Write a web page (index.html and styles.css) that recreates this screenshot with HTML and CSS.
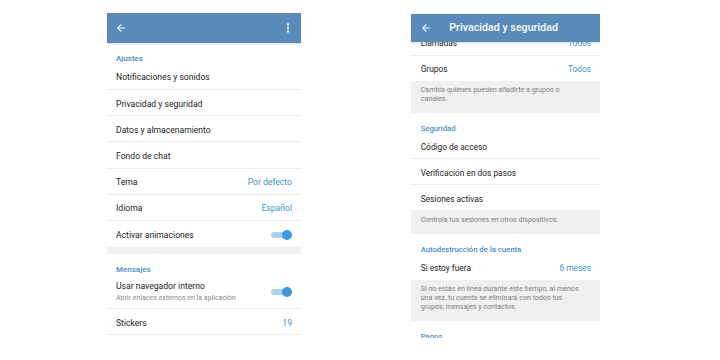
FILE: index.html
```html
<!DOCTYPE html>
<html lang="es">
<head>
<meta charset="utf-8">
<title>Ajustes</title>
<link rel="stylesheet" href="styles.css">
</head>
<body>
<div class="stage">
  <section class="phone phone-left">
    <header class="bar">
      <svg class="back" viewBox="0 0 24 24"><path d="M20 11H7.83l5.59-5.59L12 4l-8 8 8 8 1.41-1.41L7.83 13H20v-2z"/></svg>
      <svg class="more" viewBox="0 0 24 24"><circle cx="12" cy="6" r="2"/><circle cx="12" cy="12" r="2"/><circle cx="12" cy="18" r="2"/></svg>
    </header>
    <div class="sec">Ajustes</div>
    <div class="row"><span>Notificaciones y sonidos</span></div>
    <div class="row"><span>Privacidad y seguridad</span></div>
    <div class="row"><span>Datos y almacenamiento</span></div>
    <div class="row"><span>Fondo de chat</span></div>
    <div class="row"><span>Tema</span><span class="val">Por defecto</span></div>
    <div class="row"><span>Idioma</span><span class="val">Español</span></div>
    <div class="row last"><span>Activar animaciones</span>
      <svg class="toggle" viewBox="0 0 22 10"><rect x="1" y="2" width="19" height="6" rx="3"/><circle cx="17" cy="5" r="5"/></svg>
    </div>
    <div class="band"></div>
    <div class="sec">Mensajes</div>
    <div class="row check">
      <div class="stack"><span class="t">Usar navegador interno</span><span class="sub">Abrir enlaces externos en la aplicación</span></div>
      <svg class="toggle" viewBox="0 0 22 10"><rect x="1" y="2" width="19" height="6" rx="3"/><circle cx="17" cy="5" r="5"/></svg>
    </div>
    <div class="row"><span>Stickers</span><span class="val">19</span></div>
  </section>

  <section class="phone phone-right">
    <header class="bar">
      <svg class="back" viewBox="0 0 24 24"><path d="M20 11H7.83l5.59-5.59L12 4l-8 8 8 8 1.41-1.41L7.83 13H20v-2z"/></svg>
      <span class="title">Privacidad y seguridad</span>
    </header>
    <div class="clip"><div class="row"><span>Llamadas</span><span class="val">Todos</span></div></div>
    <div class="row last"><span>Grupos</span><span class="val">Todos</span></div>
    <div class="info">Cambia quiénes pueden añadirte a grupos o<br>canales.</div>
    <div class="sec">Seguridad</div>
    <div class="row"><span>Código de acceso</span></div>
    <div class="row"><span>Verificación en dos pasos</span></div>
    <div class="row last"><span>Sesiones activas</span></div>
    <div class="info">Controla tus sesiones en otros dispositivos.</div>
    <div class="sec">Autodestrucción de la cuenta</div>
    <div class="row last"><span>Si estoy fuera</span><span class="val">6 meses</span></div>
    <div class="info">Si no estás en línea durante este tiempo, al menos<br>una vez, tu cuenta se eliminará con todos tus<br>grupos, mensajes y contactos.</div>
    <div class="sec">Pagos</div>
  </section>
</div>
</body>
</html>
```

FILE: styles.css
```css
* { box-sizing: border-box; margin: 0; padding: 0; }
html, body { width: 720px; height: 360px; background: #fff; overflow: hidden; }
body { font-family: Roboto, "Noto Sans", sans-serif; color: #222; }

.stage { display: flex; align-items: flex-start; gap: 110px; padding-left: 107px; height: 360px; }

.phone { display: flex; flex-direction: column; overflow: hidden; background: #fff; flex: none; }
.phone-left { width: 194px; height: 325px; margin-top: 13px; }
.phone-right { width: 189px; height: 324.3px; margin-top: 14px; }

.bar { display: flex; align-items: center; flex: none; background: #588bba; color: #fff; position: relative; z-index: 1; box-shadow: 0 1px 1.5px rgba(0,0,0,0.14); }
.phone-left .bar { height: 30px; padding: 0 6px 0 8px; }
.phone-right .bar { height: 28px; padding: 0 0 0 8.5px; }
.back { width: 12px; height: 12px; fill: #fff; flex: none; }
.more { width: 14px; height: 14px; fill: #fff; margin-left: auto; flex: none; }
.title { margin-left: 17.8px; font-size: 10.6px; font-weight: 500; line-height: 12px; letter-spacing: 0.05px; }

.sec { flex: none; color: #3e90cf; font-weight: 500; line-height: 9px; white-space: nowrap; }
.phone-left .sec { height: 20.8px; font-size: 8px; padding: 11px 9px 0; }
.phone-right .sec { height: 20.4px; font-size: 7.7px; padding: 10.5px 9px 0 9.7px; }

.row { flex: none; display: flex; align-items: center; justify-content: space-between; padding: 2px 9px 0 9px; border-bottom: 1px solid #ececec; white-space: nowrap; line-height: 10px; }
.row.last { border-bottom: none; }
.phone-left .row { height: 26.2px; font-size: 8.6px; }
.phone-right .row { height: 25.5px; font-size: 8.35px; padding-left: 9.7px; }
.val { color: #3a95d5; }

.toggle { width: 22px; height: 10px; flex: none; }
.toggle rect { fill: #a6d2f4; }
.toggle circle { fill: #3a9ae6; }

.phone-left .row.check { height: 34.8px; padding-top: 1px; }
.stack { display: flex; flex-direction: column; }
.stack .t { line-height: 10px; }
.stack .sub { margin-top: 3px; line-height: 8.5px; font-size: 7px; color: #8a8a8a; }

.band { flex: none; height: 6.4px; background: #f0f0f0; }

.clip { flex: none; height: 13.5px; overflow: hidden; display: flex; flex-direction: column; justify-content: flex-end; }

.info { flex: none; background: #f0f0f0; color: #808080; font-size: 7.1px; line-height: 8.6px; padding: 5.3px 9px 10px 9.7px; white-space: nowrap; }
```
